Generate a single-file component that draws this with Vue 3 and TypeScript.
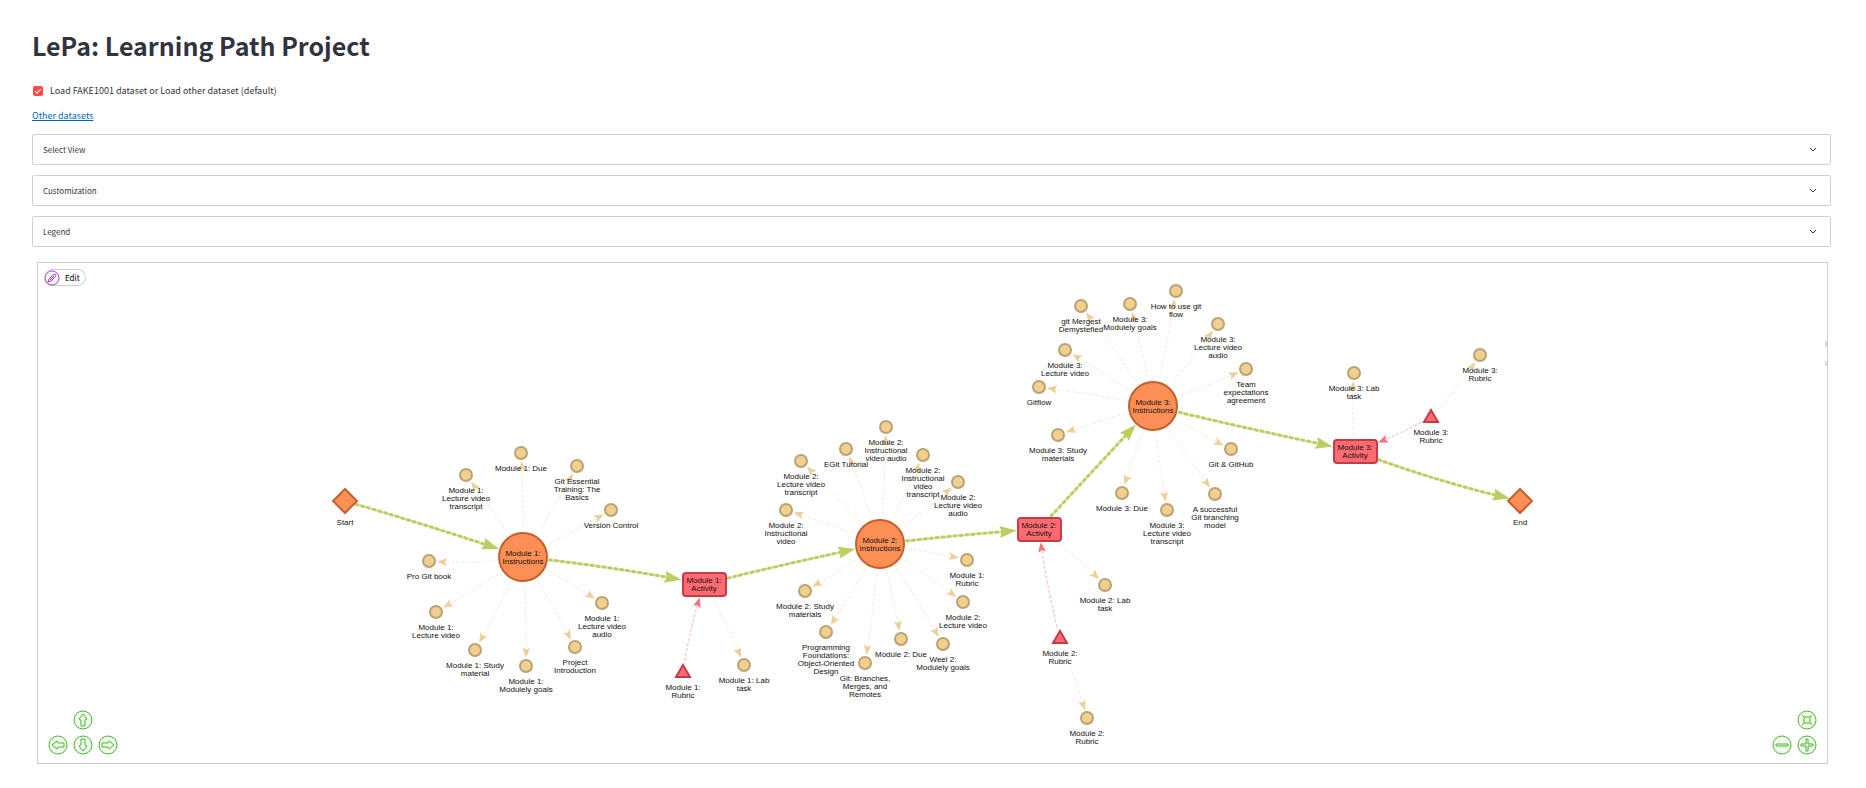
<script setup lang="ts">
import { ref } from 'vue'

type Kind = 'terminal' | 'instructions' | 'activity' | 'rubric' | 'resource'

interface GraphNode {
  id: string
  kind: Kind
  x: number
  y: number
  lines: string[]
}

interface Point {
  x: number
  y: number
}

const useFakeDataset = ref(true)
const panels = ['Select View', 'Customization', 'Legend']

const nodes: GraphNode[] = [
  { id: 'start', kind: 'terminal', x: 345, y: 501, lines: ['Start'] },
  { id: 'm1', kind: 'instructions', x: 523, y: 557, lines: ['Module 1:', 'Instructions'] },
  { id: 'm2', kind: 'instructions', x: 880, y: 544, lines: ['Module 2:', 'Instructions'] },
  { id: 'm3', kind: 'instructions', x: 1153, y: 406, lines: ['Module 3:', 'Instructions'] },
  { id: 'a1', kind: 'activity', x: 704, y: 584, lines: ['Module 1:', 'Activity'] },
  { id: 'a2', kind: 'activity', x: 1039, y: 529, lines: ['Module 2:', 'Activity'] },
  { id: 'a3', kind: 'activity', x: 1355, y: 451, lines: ['Module 3:', 'Activity'] },
  { id: 'end', kind: 'terminal', x: 1520, y: 501, lines: ['End'] },
  { id: 't1', kind: 'rubric', x: 683, y: 672, lines: ['Module 1:', 'Rubric'] },
  { id: 't2', kind: 'rubric', x: 1060, y: 638, lines: ['Module 2:', 'Rubric'] },
  { id: 't3', kind: 'rubric', x: 1431, y: 417, lines: ['Module 3:', 'Rubric'] },

  { id: 'r1-1', kind: 'resource', x: 466, y: 475, lines: ['Module 1:', 'Lecture video', 'transcript'] },
  { id: 'r1-2', kind: 'resource', x: 521, y: 453, lines: ['Module 1: Due'] },
  { id: 'r1-3', kind: 'resource', x: 577, y: 466, lines: ['Git Essential', 'Training: The', 'Basics'] },
  { id: 'r1-4', kind: 'resource', x: 611, y: 510, lines: ['Version Control'] },
  { id: 'r1-5', kind: 'resource', x: 429, y: 561, lines: ['Pro Git book'] },
  { id: 'r1-6', kind: 'resource', x: 436, y: 612, lines: ['Module 1:', 'Lecture video'] },
  { id: 'r1-7', kind: 'resource', x: 475, y: 650, lines: ['Module 1: Study', 'material'] },
  { id: 'r1-8', kind: 'resource', x: 526, y: 666, lines: ['Module 1:', 'Modulely goals'] },
  { id: 'r1-9', kind: 'resource', x: 575, y: 647, lines: ['Project', 'Introduction'] },
  { id: 'r1-10', kind: 'resource', x: 602, y: 603, lines: ['Module 1:', 'Lecture video', 'audio'] },
  { id: 'l1', kind: 'resource', x: 744, y: 665, lines: ['Module 1: Lab', 'task'] },

  { id: 'r2-1', kind: 'resource', x: 801, y: 461, lines: ['Module 2:', 'Lecture video', 'transcript'] },
  { id: 'r2-2', kind: 'resource', x: 846, y: 449, lines: ['EGit Tutorial'] },
  { id: 'r2-3', kind: 'resource', x: 886, y: 427, lines: ['Module 2:', 'Instructional', 'video audio'] },
  { id: 'r2-4', kind: 'resource', x: 923, y: 455, lines: ['Module 2:', 'Instructional', 'video', 'transcript'] },
  { id: 'r2-5', kind: 'resource', x: 958, y: 482, lines: ['Module 2:', 'Lecture video', 'audio'] },
  { id: 'r2-6', kind: 'resource', x: 786, y: 510, lines: ['Module 2:', 'Instructional', 'video'] },
  { id: 'r2-7', kind: 'resource', x: 967, y: 560, lines: ['Module 1:', 'Rubric'] },
  { id: 'r2-8', kind: 'resource', x: 963, y: 602, lines: ['Module 2:', 'Lecture video'] },
  { id: 'r2-9', kind: 'resource', x: 943, y: 644, lines: ['Weel 2:', 'Modulely goals'] },
  { id: 'r2-10', kind: 'resource', x: 901, y: 639, lines: ['Module 2: Due'] },
  { id: 'r2-11', kind: 'resource', x: 865, y: 663, lines: ['Git: Branches,', 'Merges, and', 'Remotes'] },
  { id: 'r2-12', kind: 'resource', x: 826, y: 632, lines: ['Programming', 'Foundations:', 'Object-Oriented', 'Design'] },
  { id: 'r2-13', kind: 'resource', x: 805, y: 591, lines: ['Module 2: Study', 'materials'] },
  { id: 'l2', kind: 'resource', x: 1105, y: 585, lines: ['Module 2: Lab', 'task'] },
  { id: 'rr2', kind: 'resource', x: 1087, y: 718, lines: ['Module 2:', 'Rubric'] },

  { id: 'r3-1', kind: 'resource', x: 1081, y: 306, lines: ['git Mergest', 'Demystefied'] },
  { id: 'r3-2', kind: 'resource', x: 1130, y: 304, lines: ['Module 3:', 'Modulely goals'] },
  { id: 'r3-3', kind: 'resource', x: 1176, y: 291, lines: ['How to use git', 'flow'] },
  { id: 'r3-4', kind: 'resource', x: 1218, y: 324, lines: ['Module 3:', 'Lecture video', 'audio'] },
  { id: 'r3-5', kind: 'resource', x: 1246, y: 369, lines: ['Team', 'expectations', 'agreement'] },
  { id: 'r3-6', kind: 'resource', x: 1065, y: 350, lines: ['Module 3:', 'Lecture video'] },
  { id: 'r3-7', kind: 'resource', x: 1039, y: 387, lines: ['Gitflow'] },
  { id: 'r3-8', kind: 'resource', x: 1058, y: 435, lines: ['Module 3: Study', 'materials'] },
  { id: 'r3-9', kind: 'resource', x: 1122, y: 493, lines: ['Module 3: Due'] },
  { id: 'r3-10', kind: 'resource', x: 1167, y: 510, lines: ['Module 3:', 'Lecture video', 'transcript'] },
  { id: 'r3-11', kind: 'resource', x: 1215, y: 494, lines: ['A successful', 'Git branching', 'model'] },
  { id: 'r3-12', kind: 'resource', x: 1231, y: 449, lines: ['Git & GitHub'] },
  { id: 'l3', kind: 'resource', x: 1354, y: 373, lines: ['Module 3: Lab', 'task'] },
  { id: 'rr3', kind: 'resource', x: 1480, y: 355, lines: ['Module 3:', 'Rubric'] },
]

const byId = new Map(nodes.map((n) => [n.id, n]))

type EdgeKind = 'path' | 'assess' | 'link'
type EdgeSpec = [from: string, to: string, kind: EdgeKind, bend: number]

// A positive bend bows the edge to the right of its direction of travel.
const edgeSpecs: EdgeSpec[] = [
  ['start', 'm1', 'path', -2],
  ['m1', 'a1', 'path', -4],
  ['a1', 'm2', 'path', -2],
  ['m2', 'a2', 'path', -2],
  ['a2', 'm3', 'path', 0],
  ['m3', 'a3', 'path', 2],
  ['a3', 'end', 'path', 6],
  ['t1', 'a1', 'assess', -4],
  ['t2', 'a2', 'assess', -4],
  ['t3', 'a3', 'assess', -4],
  ['a1', 'l1', 'link', -4],
  ['a2', 'l2', 'link', -4],
  ['a3', 'l3', 'link', -4],
  ['t2', 'rr2', 'link', -2],
  ['t3', 'rr3', 'link', 4],
  ...nodes
    .filter((n) => /^r[123]-/.test(n.id))
    .map((n): EdgeSpec => ['m' + n.id[1], n.id, 'link', n.id === 'r1-5' ? -6 : n.y < 540 ? 2 : -2]),
]

function insideNode(n: GraphNode, p: Point, pad: number): boolean {
  const dx = Math.abs(p.x - n.x)
  const dy = Math.abs(p.y - n.y)
  if (n.kind === 'activity') return dx < 22 + pad && dy < 12 + pad
  if (n.kind === 'terminal') return dx + dy < 12 + pad
  if (n.kind === 'instructions') return Math.hypot(dx, dy) < 25 + pad
  return Math.hypot(dx, dy) < 7 + pad
}

const edges = edgeSpecs.map(([from, to, kind, bend]) => {
  const a = byId.get(from)!
  const b = byId.get(to)!
  const len = Math.hypot(b.x - a.x, b.y - a.y)
  const c: Point = {
    x: (a.x + b.x) / 2 - ((b.y - a.y) / len) * bend,
    y: (a.y + b.y) / 2 + ((b.x - a.x) / len) * bend,
  }
  const at = (t: number): Point => ({
    x: (1 - t) ** 2 * a.x + 2 * t * (1 - t) * c.x + t * t * b.x,
    y: (1 - t) ** 2 * a.y + 2 * t * (1 - t) * c.y + t * t * b.y,
  })
  const all = Array.from({ length: 201 }, (_, i) => at(i / 200))
  const pts = all.filter(
    (p) => !insideNode(a, p, kind === 'path' ? 0 : 4) && !insideNode(b, p, kind === 'path' ? 0 : 1),
  )
  const tip = pts[pts.length - 1]
  const prev = pts[Math.max(0, pts.length - 12)]
  const size = kind === 'path' ? 16 : 9
  const line = pts.filter((p) => Math.hypot(p.x - tip.x, p.y - tip.y) > size * 0.7)
  return {
    key: from + '>' + to,
    kind,
    d: 'M' + line.map((p) => p.x.toFixed(1) + ' ' + p.y.toFixed(1)).join('L'),
    arrow: kind === 'path' ? 'M0 0L-17 6L-15 0L-17 -6Z' : 'M0 0L-10 4L-8 0L-10 -4Z',
    place: `translate(${tip.x.toFixed(1)} ${tip.y.toFixed(1)}) rotate(${(
      (Math.atan2(tip.y - prev.y, tip.x - prev.x) * 180) / Math.PI
    ).toFixed(1)})`,
  }
})

function labelY(n: GraphNode, line: number): number {
  const first = { terminal: 24, instructions: -1, activity: -1, rubric: 18, resource: 18 }[n.kind]
  return n.y + first + line * 8
}

const arrowShape = 'M9 3L13 8L11 9V15H7V9L5 8Z'
const moves = [
  { name: 'up', label: 'Move up', turn: 0 },
  { name: 'left', label: 'Move left', turn: 270 },
  { name: 'down', label: 'Move down', turn: 180 },
  { name: 'right', label: 'Move right', turn: 90 },
]
const zooms = [
  { name: 'fit', label: 'Fit graph', d: 'M6 6H12V12H6ZM4 4L6 6M14 4L12 6M4 14L6 12M14 14L12 12' },
  { name: 'out', label: 'Zoom out', d: 'M3 8H15V10H3Z' },
  { name: 'in', label: 'Zoom in', d: 'M8 3H10V8H15V10H10V15H8V10H3V8H8Z' },
]
</script>

<template>
  <main class="page">
    <h1>LePa: Learning Path Project</h1>

    <label class="check">
      <input v-model="useFakeDataset" type="checkbox" />
      <span>Load FAKE1001 dataset or Load other dataset (default)</span>
    </label>

    <p class="datasets"><a href="#">Other datasets</a></p>

    <div class="panels">
      <details v-for="panel in panels" :key="panel">
        <summary>
          <span>{{ panel }}</span>
          <svg class="chevron" width="8" height="8" viewBox="0 0 8 8" aria-hidden="true">
            <path d="M1 2L4 5L7 2" />
          </svg>
        </summary>
      </details>
    </div>

    <section class="graph" aria-label="Learning path graph">
      <svg class="canvas" viewBox="38 263 1789 500" role="img" aria-label="Learning path">
        <g v-for="edge in edges" :key="edge.key" :class="['edge', edge.kind]">
          <path v-if="edge.kind === 'path'" class="under" :d="edge.d" />
          <path class="line" :d="edge.d" />
          <path class="head" :d="edge.arrow" :transform="edge.place" />
        </g>
        <g v-for="node in nodes" :key="node.id" :class="['node', node.kind]">
          <path
            v-if="node.kind === 'terminal'"
            :d="`M${node.x} ${node.y - 12}l12 12l-12 12l-12 -12Z`"
          />
          <circle v-else-if="node.kind === 'instructions'" :cx="node.x" :cy="node.y" r="24" />
          <rect
            v-else-if="node.kind === 'activity'"
            :x="node.x - 21"
            :y="node.y - 11"
            width="43"
            height="23"
            rx="3"
          />
          <path
            v-else-if="node.kind === 'rubric'"
            :d="`M${node.x} ${node.y - 7}l7 12h-14Z`"
          />
          <circle v-else :cx="node.x" :cy="node.y" r="6" />
          <text v-for="(line, i) in node.lines" :key="i" :x="node.x" :y="labelY(node, i)">{{ line }}</text>
        </g>
        <path class="clipped" d="M1826 341v6M1826 361v5" />
      </svg>

      <button class="edit" type="button">
        <svg width="16" height="16" viewBox="0 0 16 16" aria-hidden="true">
          <circle cx="8" cy="8" r="7" />
          <path d="M4 12L5 9L10 4Q12 4 12 6L7 11ZM6 10L10 6" />
        </svg>
        <span>Edit</span>
      </button>

      <div class="pad moves">
        <button v-for="m in moves" :key="m.name" :class="m.name" type="button" :aria-label="m.label">
          <svg width="20" height="20" viewBox="-1 -1 20 20" aria-hidden="true">
            <circle cx="9" cy="9" r="9" />
            <path :d="arrowShape" :transform="`rotate(${m.turn} 9 9)`" />
          </svg>
        </button>
      </div>
      <div class="pad zooms">
        <button v-for="z in zooms" :key="z.name" :class="z.name" type="button" :aria-label="z.label">
          <svg width="20" height="20" viewBox="-1 -1 20 20" aria-hidden="true">
            <circle cx="9" cy="9" r="9" />
            <path :d="z.d" />
          </svg>
        </button>
      </div>
    </section>
  </main>
</template>

<style>
body {
  margin: 0;
  background: #fff;
}
</style>

<style scoped>
.page {
  padding: 25px 35px 24px 32px;
  color: #31333f;
  font-family: 'Noto Sans CJK SC', 'Noto Sans', sans-serif;
  font-size: 9px;
  line-height: 16px;
}

h1 {
  margin: 0;
  font-size: 25px;
  font-weight: 700;
  line-height: 40px;
}

.check {
  display: flex;
  align-items: center;
  gap: 7px;
  width: fit-content;
  margin: 18px 0 0 1px;
}

.check input {
  appearance: none;
  flex: none;
  width: 10px;
  height: 10px;
  margin: 0;
  border-radius: 2px;
  background: #ff4b4b;
  display: grid;
  place-items: center;
}

.check input:not(:checked) {
  background: #ccc;
}

.check input:checked::before {
  content: '';
  width: 5px;
  height: 2px;
  margin-bottom: 2px;
  border: solid #fff;
  border-width: 0 0 1px 1px;
  rotate: -45deg;
}

.datasets {
  margin: 9px 0 10px;
}

.datasets a {
  color: #0068b5;
  text-decoration: underline;
}

.panels {
  display: grid;
  gap: 10px;
}

details {
  border: 1px solid #d0d1d4;
  border-radius: 2px;
}

summary {
  display: flex;
  align-items: center;
  justify-content: space-between;
  height: 29px;
  padding: 0 13px 0 10px;
  font-size: 8px;
  list-style: none;
  cursor: pointer;
}

.chevron path {
  fill: none;
  stroke: #31333f;
}

.graph {
  position: relative;
  margin: 15px 3px 0 5px;
  border: 1px solid #ccc;
}

.canvas {
  display: block;
  width: 100%;
  height: auto;
}

.instructions,
.terminal {
  fill: #fb8f56;
  stroke: #c0622f;
  stroke-width: 2;
}

.activity,
.rubric {
  fill: #ff6b70;
  stroke: #c23c48;
  stroke-width: 2;
}

.resource {
  fill: #f0d08c;
  stroke: #b9a376;
  stroke-width: 2;
}

.node text {
  fill: #111;
  stroke: none;
  font-family: 'Liberation Sans', Arial, sans-serif;
  font-size: 8px;
  text-anchor: middle;
}

.edge path {
  fill: none;
}

.edge .head {
  stroke: none;
}

.path .under {
  stroke: #d3df93;
  stroke-width: 2;
}

.path .line {
  stroke: #bccd62;
  stroke-width: 3;
  stroke-dasharray: 4 2;
}

.edge.path .head {
  fill: #bccd62;
}

.link .line {
  stroke: #f3e6cc;
  stroke-dasharray: 3 2;
}

.edge.link .head {
  fill: #ebd09b;
}

.assess .line {
  stroke: #f7a6ae;
  stroke-dasharray: 3 2;
}

.edge.assess .head {
  fill: #fa7078;
}

.clipped {
  stroke: #bbb;
}

button {
  padding: 0;
  border: 0;
  background: none;
  cursor: pointer;
}

.edit {
  position: absolute;
  top: 6px;
  left: 6px;
  display: flex;
  align-items: center;
  gap: 5px;
  height: 17px;
  padding-right: 5px;
  border: 1px solid #ccc;
  border-left: 0;
  border-radius: 9px;
  color: #000;
  font-family: inherit;
  font-size: 8px;
}

.edit svg {
  fill: none;
  stroke: #a63fbe;
}

.pad {
  position: absolute;
  bottom: 8px;
  display: grid;
  gap: 5px;
}

.pad button {
  width: 20px;
  height: 20px;
}

.pad svg {
  display: block;
  fill: none;
  stroke: #4cb43c;
  border-radius: 50%;
  background: #f0fbe9;
}

.moves {
  left: 10px;
  grid-template-areas: '. up .' 'left down right';
}

.zooms {
  right: 10px;
  grid-template-areas: '. fit' 'out in';
}

.up {
  grid-area: up;
}

.left {
  grid-area: left;
}

.down {
  grid-area: down;
}

.right {
  grid-area: right;
}

.fit {
  grid-area: fit;
}

.out {
  grid-area: out;
}

.in {
  grid-area: in;
}
</style>
